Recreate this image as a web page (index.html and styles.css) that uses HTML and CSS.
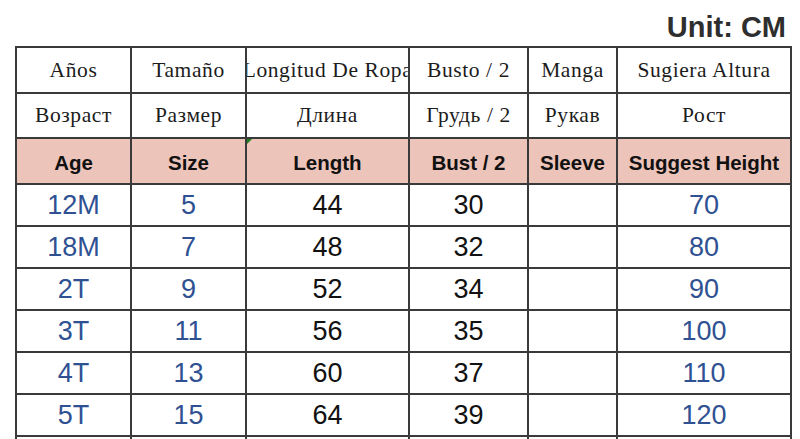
FILE: index.html
```html
<!DOCTYPE html>
<html>
<head>
<meta charset="utf-8">
<link rel="stylesheet" href="styles.css">
</head>
<body>
<div class="unit">Unit: CM</div>
<table class="size-table">
  <colgroup>
    <col class="c1"><col class="c2"><col class="c3"><col class="c4"><col class="c5"><col class="c6">
  </colgroup>
  <tr class="row-es">
    <td><div class="clip">Años</div></td>
    <td><div class="clip">Tamaño</div></td>
    <td><div class="clip">Longitud De Ropa</div></td>
    <td><div class="clip">Busto / 2</div></td>
    <td><div class="clip">Manga</div></td>
    <td><div class="clip">Sugiera Altura</div></td>
  </tr>
  <tr class="row-ru">
    <td><div class="clip">Возраст</div></td>
    <td><div class="clip">Размер</div></td>
    <td><div class="clip">Длина</div></td>
    <td><div class="clip">Грудь / 2</div></td>
    <td><div class="clip">Рукав</div></td>
    <td><div class="clip">Рост</div></td>
  </tr>
  <tr class="row-en">
    <td>Age</td>
    <td>Size</td>
    <td class="marked">Length<span class="mark"></span></td>
    <td>Bust / 2</td>
    <td>Sleeve</td>
    <td>Suggest Height</td>
  </tr>
  <tr class="row-data"><td class="blue">12M</td><td class="blue">5</td><td>44</td><td>30</td><td></td><td class="blue">70</td></tr>
  <tr class="row-data"><td class="blue">18M</td><td class="blue">7</td><td>48</td><td>32</td><td></td><td class="blue">80</td></tr>
  <tr class="row-data"><td class="blue">2T</td><td class="blue">9</td><td>52</td><td>34</td><td></td><td class="blue">90</td></tr>
  <tr class="row-data"><td class="blue">3T</td><td class="blue">11</td><td>56</td><td>35</td><td></td><td class="blue">100</td></tr>
  <tr class="row-data"><td class="blue">4T</td><td class="blue">13</td><td>60</td><td>37</td><td></td><td class="blue">110</td></tr>
  <tr class="row-data"><td class="blue">5T</td><td class="blue">15</td><td>64</td><td>39</td><td></td><td class="blue">120</td></tr>
  <tr class="row-data"><td></td><td></td><td></td><td></td><td></td><td></td></tr>
</table>
</body>
</html>
```
FILE: styles.css
```css
html, body {
  margin: 0;
  padding: 0;
  background: #ffffff;
  overflow: hidden;
}
body {
  width: 800px;
  height: 439px;
}
.unit {
  font-family: "Liberation Sans", Arial, sans-serif;
  font-weight: bold;
  font-size: 29px;
  color: #2e2e2e;
  text-align: right;
  padding: 9px 14px 0 0;
  line-height: 37px;
  height: 37px;
}
.size-table {
  margin-left: 15px;
  border-collapse: collapse;
  table-layout: fixed;
  width: 777px;
}
.c1 { width: 115px; }
.c2 { width: 115px; }
.c3 { width: 163px; }
.c4 { width: 119px; }
.c5 { width: 89px; }
.c6 { width: 174px; }
.size-table td {
  border: 2px solid #3a3a3a;
  padding: 0;
  text-align: center;
  vertical-align: middle;
  white-space: nowrap;
}
.clip {
  display: flex;
  justify-content: center;
  overflow: hidden;
  white-space: nowrap;
}
.row-es td, .row-ru td {
  font-family: "Liberation Serif", "Times New Roman", serif;
  font-size: 21.5px;
  letter-spacing: 0.6px;
  color: #1c1c1c;
}
.row-es { height: 46px; }
.row-ru { height: 45px; }
.row-en { height: 46px; }
.row-en td {
  background: #ecc4ba;
  font-family: "Liberation Sans", Arial, sans-serif;
  font-weight: bold;
  font-size: 20.5px;
  color: #111111;
  padding-top: 4px;
}
.marked { position: relative; }
.mark {
  position: absolute;
  left: 0;
  top: 0;
  width: 0;
  height: 0;
  border-top: 5px solid #1e7d1e;
  border-right: 5px solid transparent;
}
.row-data { height: 42px; }
.row-data td {
  font-family: "Liberation Sans", Arial, sans-serif;
  font-size: 27px;
  color: #111111;
}
.row-data td.blue { color: #2f5192; }
```
